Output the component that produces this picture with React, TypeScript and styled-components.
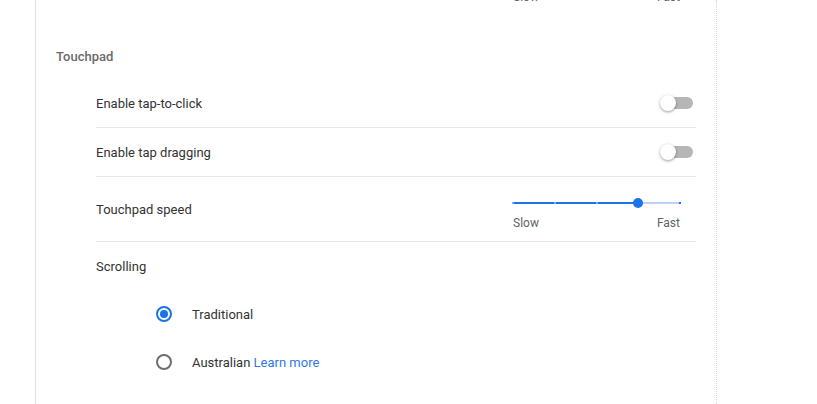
import styled, { createGlobalStyle } from 'styled-components';

const GlobalStyle = createGlobalStyle`
    html, body {
        margin: 0;
        padding: 0;
        background: #ffffff;
        overflow: hidden;
    }
    body {
        font-family: Roboto, "Liberation Sans", Arial, sans-serif;
        font-size: 13px;
        color: #333333;
    }
`;

const Page = styled.div`
    width: 817px;
    height: 404px;
    padding-left: 35px;
    box-sizing: border-box;
    overflow: hidden;
`;
const Card = styled.div`
    width: 682px;
    height: 404px;
    box-sizing: border-box;
    border-left: 1px solid #e2e2e2;
    border-right: 1px dotted #d6d6d6;
`;
const SliderLabels = styled.div<{ top?: number }>`
    display: flex;
    justify-content: space-between;
    width: 167px;
    margin-top: ${(p) => p.top ?? 0}px;
    font-size: 12px;
    line-height: 16px;
    color: #5f6368;
`;
const PrevSlider = styled.div`
    display: flex;
    justify-content: flex-end;
    padding-right: 36px;
    height: 5px;
    margin-bottom: 29px;
`;
const SectionHeader = styled.div`
    height: 45px;
    display: flex;
    align-items: center;
    padding-left: 20px;
    padding-bottom: 1px;
    box-sizing: border-box;
    font-weight: 500;
    font-size: 13px;
    color: #6a6a6a;
`;
const List = styled.div`
    padding: 0 20px 0 60px;
`;
const Row = styled.div<{ tall?: boolean; divider?: boolean }>`
    height: ${(p) => (p.tall ? 64 : 48)}px;
    display: flex;
    align-items: center;
    justify-content: space-between;
    border-bottom: ${(p) => (p.divider ? '1px solid #e8e8e8' : 'none')};
`;
const Label = styled.span`
    font-size: 13px;
    color: #333333;
`;
const Toggle = styled.div`
    position: relative;
    width: 30px;
    height: 12px;
    margin-right: 3px;
    border-radius: 6px;
    background: #b6b6b6;
`;
const Knob = styled.div`
    position: absolute;
    left: -3px;
    top: -2px;
    width: 16px;
    height: 16px;
    border-radius: 50%;
    background: #ffffff;
    box-shadow: 0 1px 3px rgba(0, 0, 0, 0.4);
`;
const Slider = styled.div`
    display: flex;
    flex-direction: column;
    align-items: flex-start;
    margin-right: 16px;
    padding-top: 14px;
`;
const Track = styled.div`
    position: relative;
    width: 167px;
    height: 2px;
    background: #bbd3f6;
`;
const Fill = styled.div`
    position: absolute;
    left: 0;
    top: 0;
    height: 2px;
    background: #1a73e8;
`;
const Tick = styled.div<{ active?: boolean }>`
    position: absolute;
    top: 0;
    width: 2px;
    height: 2px;
    background: ${(p) => (p.active ? '#7aa7ee' : '#1a73e8')};
`;
const Thumb = styled.div`
    position: absolute;
    top: -4px;
    width: 10px;
    height: 10px;
    margin-left: -5px;
    border-radius: 50%;
    background: #1a73e8;
`;
const RadioGroup = styled.div`
    padding-left: 60px;
`;
const RadioRow = styled.div`
    height: 48px;
    display: flex;
    align-items: center;
    gap: 20px;
`;
const Radio = styled.div<{ checked?: boolean }>`
    width: 16px;
    height: 16px;
    box-sizing: border-box;
    border-radius: 50%;
    border: 2px solid ${(p) => (p.checked ? '#1a73e8' : '#6e6e6e')};
    display: flex;
    align-items: center;
    justify-content: center;
    &::after {
        content: '';
        display: ${(p) => (p.checked ? 'block' : 'none')};
        width: 8px;
        height: 8px;
        border-radius: 50%;
        background: #1a73e8;
    }
`;
const Link = styled.a`
    color: #2f7ae5;
    text-decoration: none;
`;

const steps = 5;
const value = 3;

function SpeedSlider() {
    const pct = (value / (steps - 1)) * 100;
    return (
        <Slider>
            <Track>
                <Fill style={{ width: `${pct}%` }} />
                {Array.from({ length: steps }).map((_, i) => (
                    <Tick key={i} active={i < value} style={{ left: `calc(${(i / (steps - 1)) * 100}% - 1px)` }} />
                ))}
                <Thumb style={{ left: `${pct}%` }} />
            </Track>
            <SliderLabels top={11}>
                <span>Slow</span>
                <span>Fast</span>
            </SliderLabels>
        </Slider>
    );
}

export default function App() {
    return (
        <Page>
            <GlobalStyle />
            <Card>
                <PrevSlider>
                    <SliderLabels top={-11}>
                        <span>Slow</span>
                        <span>Fast</span>
                    </SliderLabels>
                </PrevSlider>
                <SectionHeader>Touchpad</SectionHeader>
                <List>
                    <Row divider>
                        <Label>Enable tap-to-click</Label>
                        <Toggle><Knob /></Toggle>
                    </Row>
                    <Row divider>
                        <Label>Enable tap dragging</Label>
                        <Toggle><Knob /></Toggle>
                    </Row>
                    <Row divider tall>
                        <Label>Touchpad speed</Label>
                        <SpeedSlider />
                    </Row>
                    <Row>
                        <Label>Scrolling</Label>
                    </Row>
                    <RadioGroup>
                        <RadioRow>
                            <Radio checked />
                            <Label>Traditional</Label>
                        </RadioRow>
                        <RadioRow>
                            <Radio />
                            <Label>Australian <Link href="#">Learn more</Link></Label>
                        </RadioRow>
                    </RadioGroup>
                </List>
            </Card>
        </Page>
    );
}
